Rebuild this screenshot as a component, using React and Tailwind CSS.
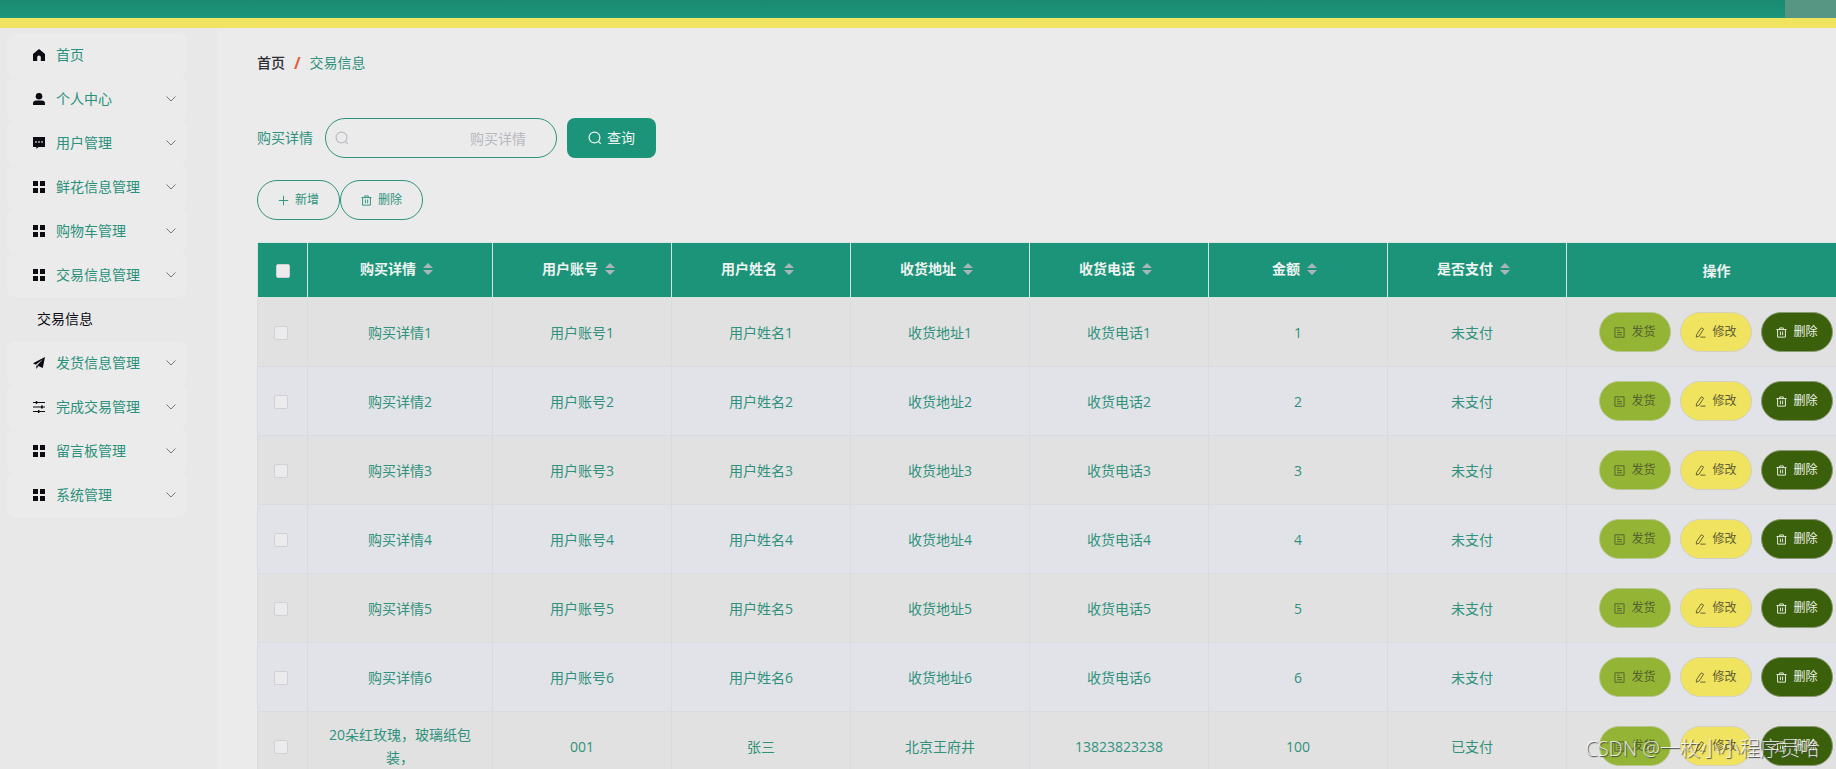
const menu = [
  { label: '首页', icon: 'home' },
  { label: '个人中心', icon: 'user', children: [] },
  { label: '用户管理', icon: 'chat', children: [] },
  { label: '鲜花信息管理', icon: 'grid', children: [] },
  { label: '购物车管理', icon: 'grid', children: [] },
  { label: '交易信息管理', icon: 'grid', children: ['交易信息'] },
  { label: '发货信息管理', icon: 'send', children: [] },
  { label: '完成交易管理', icon: 'sliders', children: [] },
  { label: '留言板管理', icon: 'grid', children: [] },
  { label: '系统管理', icon: 'grid', children: [] },
];

const columns = ['购买详情', '用户账号', '用户姓名', '收货地址', '收货电话', '金额', '是否支付'];

const rows = [
  ...[1, 2, 3, 4, 5, 6].map((n) => [
    `购买详情${n}`, `用户账号${n}`, `用户姓名${n}`, `收货地址${n}`, `收货电话${n}`, `${n}`, '未支付',
  ]),
  ['20朵红玫瑰，玻璃纸包装，', '001', '张三', '北京王府井', '13823823238', '100', '已支付'],
];

const menuIcons = {
  home: <path d="M6 0 0 5V12H4.200V8.200a1.800 1.800 0 0 1 3.600 0V12H12V5z" />,
  user: (
    <>
      <circle cx="6" cy="3.200" r="3.300" />
      <path d="M0 12v-1.800C0 8.400 1.400 7.600 3 7.600h6c1.600 0 3 .8 3 2.600V12z" />
    </>
  ),
  chat: (
    <path
      fillRule="evenodd"
      d="M0 0h12v10H5.600L3.400 12V10H0zM2.200 4.200v1.500h1.500V4.200zM5.250 4.200v1.500h1.500V4.200zM8.300 4.200v1.500h1.500V4.200z"
    />
  ),
  grid: <path d="M0 0h5v5H0zM7 0h5v5H7zM0 7h5v5H0zM7 7h5v5H7z" />,
  send: <path d="M12 0 0 6.300l2.700 1.400L9.800 2.300 4 8.400 9.800 11zM3.300 8.600V12l1.900-2.500z" />,
  sliders: (
    <>
      <path d="M0 1h12v1H0zM0 5.500h12v1H0zM0 10h12v1H0z" />
      <path d="M2.800 0h1.400v3H2.800zM8 4.500h1.800v3H8zM5 9h1.400v3H5z" />
    </>
  ),
};

function MenuIcon({ name }) {
  return (
    <svg className="h-3 w-3 shrink-0 fill-[#0c0c12]" viewBox="0 0 12 12">
      {menuIcons[name]}
    </svg>
  );
}

function Icon({ className, children }) {
  return (
    <svg className={`shrink-0 ${className}`} viewBox="0 0 14 14" fill="none" stroke="currentColor" strokeWidth={1.2}>
      {children}
    </svg>
  );
}

const SearchIcon = ({ className }) => (
  <Icon className={className}>
    <circle cx="6.500" cy="6.500" r="5.400" />
    <path d="M10.400 10.400 12.800 12.800" />
  </Icon>
);

const PlusIcon = ({ className }) => (
  <Icon className={className}>
    <path d="M7 1v12M1 7h12" />
  </Icon>
);

const TrashIcon = ({ className }) => (
  <Icon className={className}>
    <path d="M.6 3.300h12.800M4.700 3.300V1.200h4.600v2.100M2 3.300v9.600h10V3.300M5.600 5.800v4.700M8.400 5.800v4.700" />
  </Icon>
);

const TicketIcon = ({ className }) => (
  <Icon className={className}>
    <path d="M1.200 1h11.600v12H1.200zM4 4.200h3M4 7h6M4 9.800h6" />
  </Icon>
);

const EditIcon = ({ className }) => (
  <Icon className={className}>
    <path d="M8 1 10.900 2.700 5.200 11.700 1.600 12.900 1.900 9.900zM6.800 12.900h6.600" />
  </Icon>
);

function ChevronIcon() {
  return (
    <svg className="h-3 w-3" viewBox="0 0 12 12" fill="none" stroke="#77777c" strokeWidth={1}>
      <path d="M1.500 3.500 6 8l4.500-4.500" />
    </svg>
  );
}

function SortIcon() {
  return (
    <svg className="ml-[7px] mr-[7px] h-3 w-2.5" viewBox="0 0 10 12" fill="#a9b5b8">
      <path d="M5 0l5 5H0zM0 7h10l-5 5z" />
    </svg>
  );
}

function Sidebar() {
  return (
    <aside className="w-[217px] shrink-0 bg-[#e8e8e8] pl-[7px] pt-[5px]">
      <ul className="w-[180px]">
        {menu.map((item) => (
          <li key={item.label}>
            <button type="button" className="flex h-11 w-full items-center rounded-lg bg-[#ebebeb] pl-[26px] pr-2.5 text-[#2a917a]">
              <MenuIcon name={item.icon} />
              <span className="ml-[11px] flex-1 text-left">{item.label}</span>
              {item.children && <ChevronIcon />}
            </button>
            {item.children?.map((child) => (
              <a key={child} href="#" className="flex h-11 items-center pl-[30px] text-[#0c0c12]">
                {child}
              </a>
            ))}
          </li>
        ))}
      </ul>
    </aside>
  );
}

function RowActions() {
  const base = 'flex h-10 w-[72px] items-center justify-center gap-1.5 rounded-full border text-xs';
  return (
    <div className="flex justify-center gap-[9px] pr-px">
      <button type="button" className={`${base} border-[#b9c68e] bg-[#93b434] text-[#556030]`}>
        <TicketIcon className="h-[11px] w-[11px]" />
        发货
      </button>
      <button type="button" className={`${base} border-[#d3d0c0] bg-[#efe35f] text-[#625e35]`}>
        <EditIcon className="h-[11px] w-[11px]" />
        修改
      </button>
      <button type="button" className={`${base} border-[#8b9a74] bg-[#3a600b] text-[#eef0e8]`}>
        <TrashIcon className="h-[11px] w-[11px]" />
        删除
      </button>
    </div>
  );
}

function OrderTable() {
  const check =
    'block h-3.5 w-3.5 appearance-none rounded-[2px] border border-[#d0d0d6] bg-[#ebebec] checked:bg-[#1c9479]';
  return (
    <table className="w-full min-w-[1610px] table-fixed border-collapse text-center">
      <colgroup>
        <col className="w-[50px]" />
        <col className="w-[185px]" />
        {columns.slice(1).map((c) => (
          <col key={c} className="w-[179px]" />
        ))}
        <col />
      </colgroup>
      <thead>
        <tr className="h-[55px] bg-[#1c9479] text-[#eef3f1]">
          <th className="border border-[#d5e6e2] pl-[18px] pt-0.5">
            <input type="checkbox" aria-label="全选" className={check} />
          </th>
          {columns.map((c) => (
            <th key={c} className="border border-[#d5e6e2] pb-0.5 font-bold">
              <span className="flex items-center justify-center">
                {c}
                <SortIcon />
              </span>
            </th>
          ))}
          <th className="border border-[#d5e6e2] pt-0.5 font-bold">操作</th>
        </tr>
      </thead>
      <tbody>
        {rows.map((row, i) => (
          <tr key={i} className="h-[69px] odd:bg-[#e2e1e1] even:bg-[#e2e3e8]">
            <td className="border border-[#d9dae4] pl-4 pt-0.5">
              <input type="checkbox" aria-label={`选择第${i + 1}行`} className={check} />
            </td>
            {row.map((cell, j) => (
              <td
                key={j}
                className="border border-[#d9dae4] px-5 leading-[23px] text-[#2f927c] nth-[8]:pr-[30px]"
              >
                {cell}
              </td>
            ))}
            <td className="border border-[#d9dae4]">
              <RowActions />
            </td>
          </tr>
        ))}
      </tbody>
    </table>
  );
}

export default function App() {
  const outline = 'flex h-10 w-[83px] items-center justify-center gap-1.5 rounded-full border border-[#2f927c] text-xs';
  return (
    <div className="relative flex h-screen flex-col overflow-hidden bg-[#ebebeb] font-['Open_Sans','Noto_Sans_CJK_SC',sans-serif] text-sm">
      <header className="flex h-7 shrink-0 justify-end border-b-10 border-[#efe360] bg-linear-to-b from-[#1a8a70] to-[#1c967b]">
        <div className="w-[51px] bg-[#569683]" />
      </header>

      <div className="flex min-h-0 flex-1">
        <Sidebar />

        <main className="min-w-0 flex-1 overflow-hidden pl-10 pt-6">
          <nav className="flex h-[22px] items-center text-[#2f927c]">
            <a href="#" className="font-medium text-[#2b2d33]">首页</a>
            <span className="mx-[9px] text-base font-bold text-[#e0603c]">/</span>
            <span>交易信息</span>
          </nav>

          <form className="mt-11 flex h-10 items-center" onSubmit={(e) => e.preventDefault()}>
            <label htmlFor="detail" className="mr-3 text-[#2f927c]">购买详情</label>
            <div className="relative">
              <SearchIcon className="absolute left-2.5 top-[13px] h-3.5 w-3.5 text-[#bcbcc4]" />
              <input
                id="detail"
                type="text"
                placeholder="购买详情"
                className="block h-10 w-[232px] rounded-full border border-[#2f927c] pl-[30px] pr-[30px] text-right outline-none placeholder:text-[#b7b8c0]"
              />
            </div>
            <button type="submit" className="ml-2.5 flex h-10 w-[89px] items-center justify-center gap-[5px] rounded-lg bg-[#1c9479] text-[#eef3f1]">
              <SearchIcon className="h-3.5 w-3.5" />
              查询
            </button>
          </form>

          <div className="my-[22px] flex text-[#2f927c]">
            <button type="button" className={outline}>
              <PlusIcon className="h-[11px] w-[11px]" />
              新增
            </button>
            <button type="button" className={outline}>
              <TrashIcon className="h-[11px] w-[11px]" />
              删除
            </button>
          </div>

          <OrderTable />
        </main>
      </div>

      <span className="pointer-events-none absolute bottom-1.5 right-4 text-xl font-light leading-7 text-white/80 [text-shadow:1px_1px_1px_#444]">
        CSDN @一枚小小程序员哈
      </span>
    </div>
  );
}
